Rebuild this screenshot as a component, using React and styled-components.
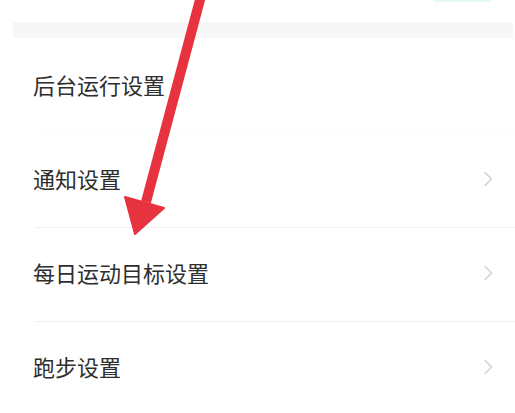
import styled, { createGlobalStyle } from "styled-components";

const GlobalStyle = createGlobalStyle`
  html, body {
    margin: 0;
    padding: 0;
    background: #fff;
  }
  body {
    font-family: "Noto Sans CJK SC", "Noto Sans", sans-serif;
  }
`;

const settings = [
  { label: "后台运行设置", arrow: false, line: false },
  { label: "通知设置", arrow: true, line: true },
  { label: "每日运动目标设置", arrow: true, line: true },
  { label: "跑步设置", arrow: true, line: true },
];

const Page = () => (
  <>
    <GlobalStyle />
    <StPage>
      <StTopBar>
        <StTopButton />
      </StTopBar>
      <StBand />
      <StList>
        {settings.map((item) => (
          <StRow key={item.label} line={item.line}>
            <StLabel>{item.label}</StLabel>
            {item.arrow && (
              <StChevron viewBox="0 0 10 16">
                <path d="M2 1.5 L8.5 8 L2 14.5" />
              </StChevron>
            )}
          </StRow>
        ))}
      </StList>
      <StPointer viewBox="0 0 515 413">
        <line x1="201" y1="-4" x2="146" y2="202" />
        <polygon points="125,197 164,208 135,234" />
      </StPointer>
    </StPage>
  </>
);

export default Page;

const StPage = styled.div`
  position: relative;
  width: 515px;
  height: 413px;
  overflow: hidden;
  background: #fff;
`;

const StTopBar = styled.div`
  height: 22px;
  display: flex;
  justify-content: flex-end;
  padding-right: 24px;
`;

const StTopButton = styled.div`
  width: 58px;
  height: 2px;
  background: #e3faf7;
  border-radius: 0 0 2px 2px;
`;

const StBand = styled.div`
  height: 16px;
  margin: 0 2px 0 13px;
  background: #f7f7f7;
`;

const StList = styled.div`
  display: flex;
  flex-direction: column;
  padding-top: 1px;
`;

const StRow = styled.div`
  height: 94px;
  box-sizing: border-box;
  padding-bottom: 6px;
  margin-left: 35px;
  padding-right: 22px;
  display: flex;
  align-items: center;
  justify-content: space-between;
  border-top: 1px solid ${({ line }) => (line ? "#f1f1f1" : "transparent")};
  &:nth-child(2) {
    border-top-color: #fbfbfb;
  }
`;

const StLabel = styled.span`
  margin-left: -2px;
  font-size: 22px;
  color: #2e2e2e;
  line-height: 1;
`;

const StChevron = styled.svg`
  width: 10px;
  height: 16px;
  margin-top: 2px;
  fill: none;
  stroke: #cfcfcf;
  stroke-width: 1.4;
  stroke-linecap: round;
  stroke-linejoin: round;
`;

const StPointer = styled.svg`
  position: absolute;
  left: 0;
  top: 0;
  width: 515px;
  height: 413px;
  pointer-events: none;
  line {
    stroke: #e7333f;
    stroke-width: 10;
  }
  polygon {
    fill: #e7333f;
    stroke: #e7333f;
    stroke-width: 2;
    stroke-linejoin: round;
  }
`;
